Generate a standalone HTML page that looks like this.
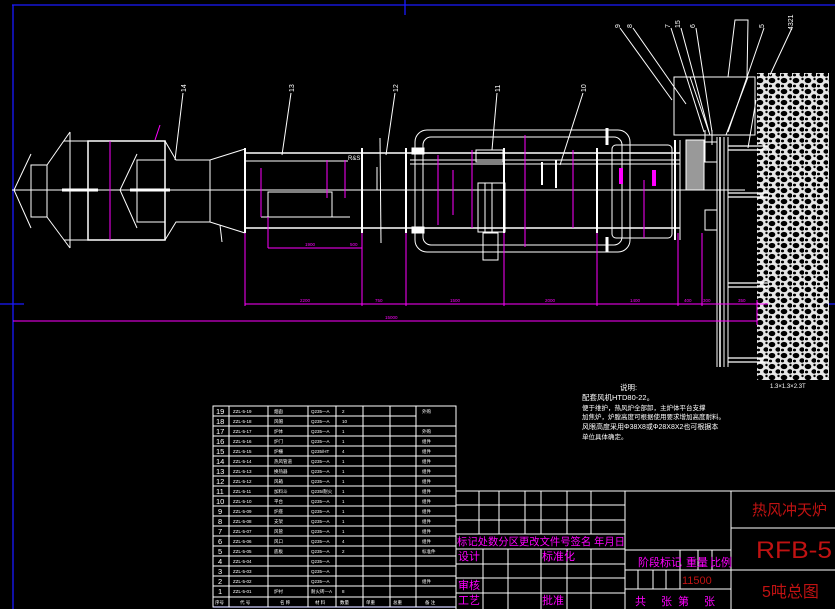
<!DOCTYPE html>
<html><head><meta charset="utf-8"><style>
html,body{margin:0;padding:0;background:#000;width:835px;height:609px;overflow:hidden}
svg{display:block}
text{font-family:"Liberation Sans","Noto Sans CJK SC",sans-serif}
</style></head><body>
<svg width="835" height="609" viewBox="0 0 835 609" xmlns="http://www.w3.org/2000/svg">
<defs>
<pattern id="grav" width="12" height="11" patternUnits="userSpaceOnUse">
<rect width="12" height="11" fill="#fff"/>
<ellipse cx="4" cy="3.5" rx="3.3" ry="2.6" fill="#000"/>
<ellipse cx="10" cy="8.5" rx="2.6" ry="2.2" fill="#000"/>
<ellipse cx="2.5" cy="9" rx="1.6" ry="1.4" fill="#000"/>
<ellipse cx="10.5" cy="2" rx="1.2" ry="1.2" fill="#000"/>
</pattern>
</defs>
<rect width="835" height="609" fill="#000"/>
<g stroke="#1a1aff" stroke-width="1.3" fill="none">
<line x1="12" y1="5" x2="835" y2="5"/>
<line x1="13" y1="5" x2="13" y2="609"/>
<line x1="405" y1="0" x2="405" y2="15"/>
<line x1="0" y1="304" x2="24" y2="304"/>
<line x1="825" y1="304" x2="835" y2="304"/>
<line x1="213" y1="607" x2="456" y2="607"/>
</g>
<rect x="757" y="73" width="72" height="307" fill="url(#grav)" opacity="0.9"/>
<g stroke="#fff" stroke-width="1" fill="none">
<line x1="12" y1="190" x2="745" y2="190"/>
<polyline points="31,154 14,190 31,228"/>
<rect x="31" y="165" width="16" height="52"/>
<line x1="47" y1="165" x2="70" y2="132"/><line x1="47" y1="217" x2="70" y2="248"/>
<line x1="70" y1="132" x2="70" y2="248"/>
<rect x="88" y="141" width="77" height="99" stroke-width="1.5"/>
<line x1="64" y1="141" x2="88" y2="141"/><line x1="64" y1="240" x2="88" y2="240"/>
<line x1="62" y1="190" x2="98" y2="190" stroke-width="3"/>
<polyline points="137,154 120,190 137,228"/>
<rect x="137" y="160" width="28" height="62"/>
<line x1="130" y1="190" x2="170" y2="190" stroke-width="3"/>
<polyline points="165,141 176,160 210,160 245,149"/>
<polyline points="165,240 176,222 210,222 245,233"/>
<line x1="210" y1="160" x2="210" y2="222"/>
<line x1="220" y1="225" x2="222" y2="242"/>
<line x1="245" y1="148" x2="245" y2="233" stroke-width="2"/>
<line x1="245" y1="153" x2="680" y2="153" stroke-width="1.5"/>
<line x1="245" y1="161" x2="348" y2="161"/>
<line x1="245" y1="228" x2="680" y2="228" stroke-width="1.5"/>
<rect x="268" y="192" width="64" height="25"/>
<line x1="261" y1="217" x2="350" y2="217"/>
<line x1="362" y1="148" x2="362" y2="233" stroke-width="2"/>
<line x1="406" y1="148" x2="406" y2="233" stroke-width="2"/>
<line x1="377" y1="167" x2="377" y2="190"/>
<line x1="380" y1="138" x2="381" y2="243"/>
<rect x="415" y="130" width="215" height="122" rx="12"/>
<rect x="423" y="137" width="199" height="108" rx="8"/>
<line x1="410" y1="160" x2="680" y2="160"/>
<line x1="410" y1="164" x2="680" y2="164"/>
<rect x="412" y="148" width="12" height="6" fill="#fff"/>
<rect x="412" y="227" width="12" height="6" fill="#fff"/>
<rect x="476" y="150" width="27" height="12"/>
<rect x="478" y="183" width="27" height="49"/>
<line x1="485" y1="183" x2="485" y2="232"/><line x1="492" y1="183" x2="492" y2="232"/>
<rect x="483" y="233" width="15" height="27"/>
<line x1="504" y1="148" x2="504" y2="233" stroke-width="2"/>
<line x1="597" y1="148" x2="597" y2="233" stroke-width="2"/>
<line x1="607" y1="128" x2="607" y2="145" stroke-width="3"/>
<line x1="607" y1="237" x2="607" y2="252" stroke-width="3"/>
<rect x="612" y="145" width="60" height="93" rx="4"/>
<line x1="542" y1="162" x2="542" y2="185" stroke-width="2"/>
<line x1="556" y1="160" x2="556" y2="188" stroke-width="2"/>
<line x1="675" y1="140" x2="675" y2="240" stroke-width="2"/>
<line x1="680" y1="140" x2="680" y2="240"/>
<rect x="686" y="140" width="18" height="50" fill="#999"/>
<rect x="705" y="142" width="12" height="20"/><rect x="705" y="210" width="12" height="20"/>
<line x1="717" y1="137" x2="717" y2="367"/><line x1="720" y1="137" x2="720" y2="367" stroke-width="1.5"/>
<line x1="724" y1="137" x2="724" y2="367"/><line x1="728" y1="137" x2="728" y2="367"/>
<g stroke-width="1.3">
<line x1="728" y1="146" x2="768" y2="146"/><line x1="728" y1="150" x2="768" y2="150"/>
<line x1="728" y1="193" x2="768" y2="193"/><line x1="728" y1="197" x2="768" y2="197"/>
<line x1="728" y1="283" x2="768" y2="283"/><line x1="728" y1="287" x2="768" y2="287"/>
<line x1="728" y1="358" x2="768" y2="358"/><line x1="728" y1="362" x2="768" y2="362"/>
</g>
<rect x="674" y="77" width="81" height="58"/>
<polyline points="728,77 735,20 748,20 747,77"/>
<line x1="710" y1="135" x2="690" y2="77"/><line x1="726" y1="135" x2="748" y2="77"/>
<line x1="705" y1="130" x2="705" y2="145"/><line x1="712" y1="130" x2="712" y2="145"/>
<line x1="620" y1="28" x2="672" y2="100"/>
<line x1="633" y1="28" x2="686" y2="104"/>
<line x1="671" y1="28" x2="704" y2="132"/>
<line x1="681" y1="28" x2="709" y2="132"/>
<line x1="696" y1="28" x2="712" y2="132"/>
<line x1="764" y1="28" x2="728" y2="132"/>
<line x1="792" y1="28" x2="770" y2="75"/>
<line x1="756" y1="100" x2="748" y2="148"/>
<line x1="183" y1="93" x2="175" y2="160"/>
<line x1="291" y1="93" x2="282" y2="155"/>
<line x1="395" y1="93" x2="386" y2="155"/>
<line x1="497" y1="93" x2="492" y2="150"/>
<line x1="583" y1="93" x2="560" y2="165"/>
</g>
<g fill="#fff" font-size="7">
<text transform="translate(186,92) rotate(-90)">14</text>
<text transform="translate(294,92) rotate(-90)">13</text>
<text transform="translate(398,92) rotate(-90)">12</text>
<text transform="translate(500,92) rotate(-90)">11</text>
<text transform="translate(586,92) rotate(-90)">10</text>
<text transform="translate(620,28) rotate(-90)">9</text>
<text transform="translate(632,28) rotate(-90)">8</text>
<text transform="translate(670,28) rotate(-90)">7</text>
<text transform="translate(680,28) rotate(-90)">15</text>
<text transform="translate(695,28) rotate(-90)">6</text>
<text transform="translate(764,28) rotate(-90)">5</text>
<text transform="translate(793,30) rotate(-90)">4321</text>
<text x="348" y="160" font-size="6">R&amp;S</text>
</g>
<g stroke="#ff00ff" stroke-width="1" fill="none">
<line x1="13" y1="321" x2="757" y2="321"/>
<line x1="245" y1="304" x2="768" y2="304"/>
<line x1="245" y1="233" x2="245" y2="306"/>
<line x1="362" y1="233" x2="362" y2="306"/>
<line x1="406" y1="233" x2="406" y2="306"/>
<line x1="504" y1="233" x2="504" y2="306"/>
<line x1="597" y1="233" x2="597" y2="306"/>
<line x1="678" y1="233" x2="678" y2="306"/>
<line x1="702" y1="233" x2="702" y2="306"/>
<line x1="757" y1="300" x2="757" y2="325"/>
<line x1="268" y1="217" x2="268" y2="248"/><line x1="268" y1="248" x2="362" y2="248"/>
<line x1="110" y1="141" x2="110" y2="240"/>
<line x1="261" y1="168" x2="261" y2="217"/>
<line x1="327" y1="160" x2="327" y2="198"/><line x1="345" y1="160" x2="345" y2="198"/>
<line x1="438" y1="155" x2="438" y2="225"/><line x1="453" y1="170" x2="453" y2="215"/>
<line x1="472" y1="150" x2="472" y2="228"/><line x1="525" y1="135" x2="525" y2="247"/>
<line x1="573" y1="150" x2="573" y2="228"/><line x1="644" y1="180" x2="644" y2="238"/>
<line x1="155" y1="140" x2="160" y2="125"/>
</g>
<g fill="#ff00ff">
<rect x="619" y="168" width="4" height="16"/><rect x="652" y="170" width="4" height="16"/>
</g>
<g fill="#ff00ff" font-size="4.5">
<text x="300" y="302">2200</text><text x="375" y="302">750</text><text x="450" y="302">1500</text>
<text x="545" y="302">2000</text><text x="630" y="302">1400</text><text x="684" y="302">400</text>
<text x="703" y="302">300</text><text x="738" y="302">350</text><text x="385" y="319">15000</text>
<text x="305" y="246">1900</text><text x="350" y="246">500</text>
</g>
<g fill="#fff" font-size="7.5">
<text x="620" y="390">说明:</text>
<text x="582" y="400">配套风机HTD80-22。</text>
<text x="582" y="410" font-size="6.5">便于维护，热风炉全部卸，主炉体平台支撑</text>
<text x="582" y="419" font-size="6.5">加焦炉，炉膛高度可根据使用要求增加高度耐料。</text>
<text x="582" y="429" font-size="7">风眼高度采用Φ38X8或Φ28X8X2也可根据本</text>
<text x="582" y="439" font-size="6.5">单位具体确定。</text>
<text x="770" y="388" font-size="6">1.3×1.3×2.3T</text>
</g>
<g stroke="#fff" stroke-width="1" fill="none">
<rect x="213" y="406" width="243" height="201"/>
<line x1="229" y1="406" x2="229" y2="607"/><line x1="268" y1="406" x2="268" y2="607"/>
<line x1="308" y1="406" x2="308" y2="607"/><line x1="336" y1="406" x2="336" y2="607"/>
<line x1="363" y1="406" x2="363" y2="607"/><line x1="390" y1="406" x2="390" y2="607"/>
<line x1="416" y1="406" x2="416" y2="607"/>
</g>
<g stroke="#fff" stroke-width="1">
<line x1="213" y1="416" x2="416" y2="416"/><line x1="213" y1="426" x2="456" y2="426"/>
<line x1="213" y1="436" x2="456" y2="436"/><line x1="213" y1="446" x2="456" y2="446"/>
<line x1="213" y1="456" x2="456" y2="456"/><line x1="213" y1="466" x2="456" y2="466"/>
<line x1="213" y1="476" x2="456" y2="476"/><line x1="213" y1="486" x2="456" y2="486"/>
<line x1="213" y1="496" x2="456" y2="496"/><line x1="213" y1="506" x2="456" y2="506"/>
<line x1="213" y1="516" x2="456" y2="516"/><line x1="213" y1="526" x2="456" y2="526"/>
<line x1="213" y1="536" x2="456" y2="536"/><line x1="213" y1="546" x2="456" y2="546"/>
<line x1="213" y1="556" x2="456" y2="556"/><line x1="213" y1="566" x2="456" y2="566"/>
<line x1="213" y1="576" x2="456" y2="576"/><line x1="213" y1="586" x2="456" y2="586"/>
<line x1="213" y1="597" x2="456" y2="597"/>
</g>
<g fill="#fff" font-size="7.5">
<text x="216" y="414">19</text><text x="216" y="424">18</text><text x="216" y="434">17</text><text x="216" y="444">16</text>
<text x="216" y="454">15</text><text x="216" y="464">14</text><text x="216" y="474">13</text><text x="216" y="484">12</text>
<text x="216" y="494">11</text><text x="216" y="504">10</text><text x="218" y="514">9</text><text x="218" y="524">8</text>
<text x="218" y="534">7</text><text x="218" y="544">6</text><text x="218" y="554">5</text><text x="218" y="564">4</text>
<text x="218" y="574">3</text><text x="218" y="584">2</text><text x="218" y="594">1</text>
</g>
<g fill="#fff" font-size="4.5">
<text x="233" y="413">ZZL-5-19</text><text x="233" y="423">ZZL-5-18</text><text x="233" y="433">ZZL-5-17</text>
<text x="233" y="443">ZZL-5-16</text><text x="233" y="453">ZZL-5-15</text><text x="233" y="463">ZZL-5-14</text>
<text x="233" y="473">ZZL-5-13</text><text x="233" y="483">ZZL-5-12</text><text x="233" y="493">ZZL-5-11</text>
<text x="233" y="503">ZZL-5-10</text><text x="233" y="513">ZZL-5-09</text><text x="233" y="523">ZZL-5-08</text>
<text x="233" y="533">ZZL-5-07</text><text x="233" y="543">ZZL-5-06</text><text x="233" y="553">ZZL-5-05</text>
<text x="233" y="563">ZZL-5-04</text><text x="233" y="573">ZZL-5-03</text><text x="233" y="583">ZZL-5-02</text>
<text x="233" y="593">ZZL-5-01</text>
<text x="274" y="413">烟囱</text><text x="274" y="423">风帽</text><text x="274" y="433">炉体</text><text x="274" y="443">炉门</text>
<text x="274" y="453">炉栅</text><text x="274" y="463">热风管道</text><text x="274" y="473">换热器</text><text x="274" y="483">风箱</text>
<text x="274" y="493">加料斗</text><text x="274" y="503">平台</text><text x="274" y="513">炉座</text><text x="274" y="523">支架</text>
<text x="274" y="533">风管</text><text x="274" y="543">风口</text><text x="274" y="553">底板</text><text x="274" y="593">炉衬</text>
<text x="311" y="413">Q235—A</text><text x="311" y="423">Q235—A</text><text x="311" y="433">Q235—A</text>
<text x="311" y="443">Q235—A</text><text x="311" y="453">Q235/HT</text><text x="311" y="463">Q235—A</text>
<text x="311" y="473">Q235—A</text><text x="311" y="483">Q235—A</text><text x="311" y="493">Q235/耐火</text>
<text x="311" y="503">Q235—A</text><text x="311" y="513">Q235—A</text><text x="311" y="523">Q235—A</text>
<text x="311" y="533">Q235—A</text><text x="311" y="543">Q235—A</text><text x="311" y="553">Q235—A</text>
<text x="311" y="563">Q235—A</text><text x="311" y="573">Q235—A</text><text x="311" y="583">Q235—A</text><text x="311" y="593">耐火砖—A</text>
<text x="342" y="413">2</text><text x="342" y="423">10</text><text x="342" y="433">1</text><text x="342" y="443">1</text>
<text x="342" y="453">4</text><text x="342" y="463">1</text><text x="342" y="473">1</text><text x="342" y="483">1</text>
<text x="342" y="493">1</text><text x="342" y="503">1</text><text x="342" y="513">1</text><text x="342" y="523">1</text>
<text x="342" y="533">1</text><text x="342" y="543">4</text><text x="342" y="553">2</text><text x="342" y="593">8</text>
<text x="422" y="413">外购</text><text x="422" y="433">外购</text><text x="422" y="443">组件</text><text x="422" y="453">组件</text>
<text x="422" y="463">组件</text><text x="422" y="473">组件</text><text x="422" y="483">组件</text><text x="422" y="493">组件</text>
<text x="422" y="503">组件</text><text x="422" y="513">组件</text><text x="422" y="523">组件</text><text x="422" y="533">组件</text>
<text x="422" y="543">组件</text><text x="422" y="553">标准件</text><text x="422" y="583">组件</text>
<text x="215" y="604">序号</text><text x="240" y="604">代 号</text><text x="280" y="604">名 称</text><text x="315" y="604">材 料</text>
<text x="340" y="604">数量</text><text x="366" y="604">单重</text><text x="393" y="604">总重</text><text x="425" y="604">备 注</text>
</g>
<g stroke="#fff" stroke-width="1" fill="none">
<line x1="456" y1="491" x2="835" y2="491"/>
<line x1="456" y1="491" x2="456" y2="609"/>
<line x1="625" y1="491" x2="625" y2="609"/>
<line x1="731" y1="491" x2="731" y2="609"/>
<line x1="479" y1="491" x2="479" y2="534"/><line x1="499" y1="491" x2="499" y2="534"/>
<line x1="525" y1="491" x2="525" y2="534"/><line x1="541" y1="491" x2="541" y2="534"/>
<line x1="567" y1="491" x2="567" y2="534"/><line x1="591" y1="491" x2="591" y2="534"/>
<line x1="456" y1="505" x2="625" y2="505"/><line x1="456" y1="520" x2="625" y2="520"/>
<line x1="456" y1="534" x2="625" y2="534"/><line x1="456" y1="549" x2="625" y2="549"/>
<line x1="456" y1="564" x2="625" y2="564"/><line x1="456" y1="578" x2="625" y2="578"/>
<line x1="456" y1="593" x2="625" y2="593"/>
<line x1="483" y1="549" x2="483" y2="609"/><line x1="508" y1="549" x2="508" y2="609"/>
<line x1="541" y1="549" x2="541" y2="609"/><line x1="567" y1="549" x2="567" y2="609"/>
<line x1="591" y1="549" x2="591" y2="609"/>
<line x1="625" y1="550" x2="731" y2="550"/><line x1="625" y1="570" x2="731" y2="570"/>
<line x1="625" y1="589" x2="731" y2="589"/>
<line x1="680" y1="550" x2="680" y2="589"/><line x1="698" y1="550" x2="698" y2="570"/>
<line x1="712" y1="550" x2="712" y2="570"/>
<line x1="638" y1="570" x2="638" y2="589"/><line x1="653" y1="570" x2="653" y2="589"/>
<line x1="666" y1="570" x2="666" y2="589"/>
<line x1="731" y1="528" x2="835" y2="528"/><line x1="731" y1="570" x2="835" y2="570"/>
</g>
<g fill="#ff00ff" font-size="11">
<text x="457" y="545" font-size="10.5" textLength="168" lengthAdjust="spacingAndGlyphs">标记处数分区更改文件号签名 年月日</text>
<text x="458" y="560">设计</text>
<text x="542" y="560">标准化</text>
<text x="458" y="589">审核</text>
<text x="458" y="604">工艺</text>
<text x="542" y="604">批准</text>
<text x="638" y="566">阶段标记</text>
<text x="686" y="566">重量</text>
<text x="710" y="566">比例</text>
<text x="635" y="605" textLength="80">共 张第 张</text>
</g>
<g fill="#c01212">
<text x="682" y="584" font-size="11">11500</text>
<text x="752" y="515" font-size="15">热风冲天炉</text>
<text x="756" y="558" font-size="24" textLength="76" lengthAdjust="spacingAndGlyphs">RFB-5</text>
<text x="762" y="597" font-size="16">5吨总图</text>
</g>
</svg>
</body></html>
